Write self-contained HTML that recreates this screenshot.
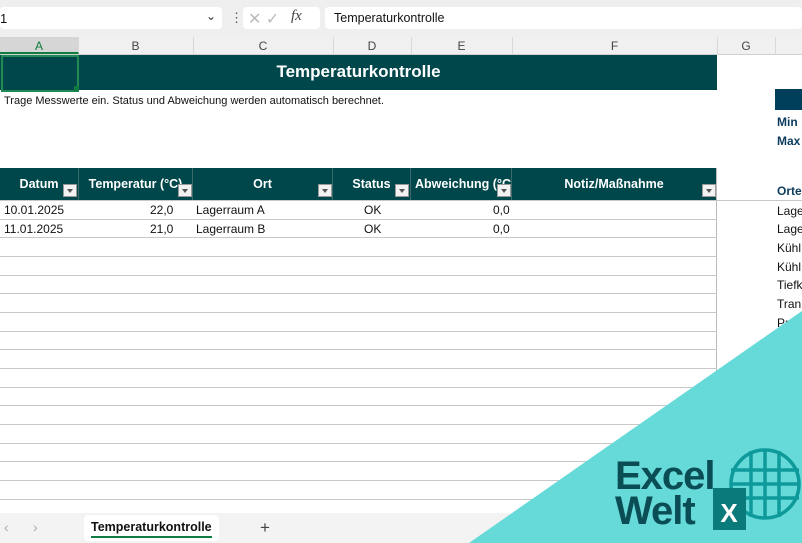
<!DOCTYPE html>
<html><head><meta charset="utf-8"><style>
body{margin:0;width:802px;height:543px;overflow:hidden;position:relative;font-family:"Liberation Sans",sans-serif;background:#fff;font-size:12px;color:#111}
.a{position:absolute}
.fb{left:0;top:0;width:802px;height:37px;background:#efefef}
.box{background:#fff;border-radius:4px;height:22px;top:7px}
.ch{top:37px;height:17px;background:#f0f0f0;border-bottom:1px solid #d0d0d0;width:802px;left:0}
.ch div{position:absolute;top:0;height:17px;border-right:1px solid #d8d8d8;text-align:center;font-size:12px;line-height:18px;color:#444}
.hl{left:0;width:717px;height:1px;background:#c8c8c8}
.th{top:168px;height:32px;background:#00474b;color:#fff;font-weight:bold;font-size:12.5px;line-height:32px;border-right:1px solid #3a6a6c;overflow:hidden;white-space:nowrap}
.dd{position:absolute;width:12px;height:11px;background:#f2f2f2;border:1px solid #999;top:16px}
.dd:after{content:"";position:absolute;left:3px;top:4px;border:3px solid transparent;border-top:4px solid #555}
.r{position:absolute;font-size:12px}
</style></head><body>
<div class="a fb"></div>
<div class="a box" style="left:0;width:222px"></div>
<div class="a" style="left:0;top:11px;font-size:13px">1</div>
<div class="a" style="left:206px;top:9px;font-size:12px;color:#333">⌄</div>
<div class="a" style="left:230px;top:10px;font-size:13px;color:#555">⋮</div>
<div class="a box" style="left:243px;width:77px"></div>
<div class="a" style="left:248px;top:9px;font-size:16px;color:#bbb">✕ ✓</div>
<div class="a" style="left:291px;top:8px;font-size:15px;font-style:italic;font-family:'Liberation Serif',serif;color:#444">fx</div>
<div class="a box" style="left:325px;width:477px"></div>
<div class="a" style="left:334px;top:11px;font-size:12.5px">Temperaturkontrolle</div>
<div class="a ch">
<div style="left:0;width:78px;background:#d6d6d6;color:#107c41;border-bottom:2px solid #107c41;height:15px">A</div>
<div style="left:78px;width:115px">B</div><div style="left:193px;width:140px">C</div><div style="left:333px;width:78px">D</div><div style="left:411px;width:101px">E</div><div style="left:512px;width:205px">F</div><div style="left:717px;width:58px">G</div>
</div>
<div class="a" style="left:0;top:55px;width:717px;height:35px;background:#00474b"></div>
<div class="a" style="left:1px;top:55px;width:74px;height:33px;border:2px solid #1f8a54"></div>
<div class="a" style="left:74px;top:86px;width:5px;height:5px;background:#107c41"></div>
<div class="a" style="left:0;top:62px;width:717px;text-align:center;color:#fff;font-weight:bold;font-size:17px">Temperaturkontrolle</div>
<div class="a" style="left:4px;top:95px;font-size:11px">Trage Messwerte ein. Status und Abweichung werden automatisch berechnet.</div>
<div class="a th" style="left:0;width:78px;text-align:center;padding-right:0">Datum<span class="dd" style="left:63px"></span></div>
<div class="a th" style="left:79px;width:113px;text-align:center">Temperatur (°C)<span class="dd" style="left:99px"></span></div>
<div class="a th" style="left:193px;width:139px;text-align:center">Ort<span class="dd" style="left:125px"></span></div>
<div class="a th" style="left:333px;width:77px;text-align:center">Status<span class="dd" style="left:62px"></span></div>
<div class="a th" style="left:411px;width:100px"><span style="position:absolute;left:4px">Abweichung (°C)</span><span class="dd" style="left:86px"></span></div>
<div class="a th" style="left:512px;width:204px;text-align:center;border-right:none">Notiz/Maßnahme<span class="dd" style="left:190px"></span></div>
<div class="a" style="left:716px;top:168px;width:1px;height:345px;background:#bbb"></div>
<div class="r" style="left:4px;top:203px">10.01.2025</div><div class="r" style="left:150px;top:203px">22,0</div><div class="r" style="left:196px;top:203px">Lagerraum A</div><div class="r" style="left:364px;top:203px">OK</div><div class="r" style="left:493px;top:203px">0,0</div>
<div class="r" style="left:4px;top:222px">11.01.2025</div><div class="r" style="left:150px;top:222px">21,0</div><div class="r" style="left:196px;top:222px">Lagerraum B</div><div class="r" style="left:364px;top:222px">OK</div><div class="r" style="left:493px;top:222px">0,0</div>
<div id="lines"></div>
<script>
var h='';var ys=[200,219,237,256,275,293,312,331,349,368,387,405,424,443,461,480,499];
ys.forEach(function(y){h+='<div class="a hl" style="top:'+y+'px"></div>'});
document.getElementById('lines').innerHTML=h;
</script>
<div class="a" style="left:717px;top:200px;width:85px;height:1px;background:#c8c8c8"></div>
<div class="a" style="left:775px;top:89px;width:27px;height:21px;background:#003f5c"></div>
<div class="r" style="left:777px;top:115px;font-weight:bold;color:#0b3b5c">Min</div>
<div class="r" style="left:777px;top:134px;font-weight:bold;color:#0b3b5c">Max</div>
<div class="r" style="left:777px;top:184px;font-weight:bold;color:#0b3b5c">Orte</div>
<div class="r" style="left:777px;top:204px">Lage</div><div class="r" style="left:777px;top:222px">Lage</div><div class="r" style="left:777px;top:241px">Kühl</div><div class="r" style="left:777px;top:260px">Kühl</div><div class="r" style="left:777px;top:278px">Tiefk</div><div class="r" style="left:777px;top:297px">Tran</div><div class="r" style="left:777px;top:316px">Pr</div>
<div class="a" style="left:0;top:513px;width:802px;height:30px;background:#f3f3f3"></div>
<div class="a" style="left:4px;top:519px;color:#aaa;font-size:14px">‹</div><div class="a" style="left:33px;top:519px;color:#aaa;font-size:14px">›</div>
<div class="a" style="left:84px;top:515px;width:135px;height:26px;background:#fff;border-radius:4px"></div>
<div class="a" style="left:91px;top:520px;font-weight:bold;font-size:12.5px">Temperaturkontrolle</div>
<div class="a" style="left:91px;top:536px;width:121px;height:2px;background:#107c41"></div>
<div class="a" style="left:260px;top:518px;font-size:17px;color:#444">+</div>
<svg class="a" style="left:0;top:0" width="802" height="543">
<polygon points="802,311 469,543 802,543" fill="#66d9d9"/>
<g stroke="#0e9a9a" stroke-width="3.5" fill="none">
<circle cx="765" cy="484" r="34"/>
<line x1="731" y1="470" x2="799" y2="470"/><line x1="731" y1="484" x2="799" y2="484"/><line x1="731" y1="498" x2="799" y2="498"/>
<line x1="751" y1="451" x2="751" y2="517"/><line x1="765" y1="450" x2="765" y2="518"/><line x1="779" y1="451" x2="779" y2="517"/>
</g>
<rect x="713" y="488" width="33" height="42" fill="#0b7a7a"/>
<text x="729" y="522" font-family="Liberation Sans" font-weight="bold" font-size="26" fill="#fff" text-anchor="middle">X</text>
<text x="615" y="489" font-family="Liberation Sans" font-weight="bold" font-size="40" fill="#0a4d54" letter-spacing="-1">Excel</text>
<text x="615" y="524" font-family="Liberation Sans" font-weight="bold" font-size="40" fill="#0a4d54" letter-spacing="-1">Welt</text>
</svg>
</body></html>
